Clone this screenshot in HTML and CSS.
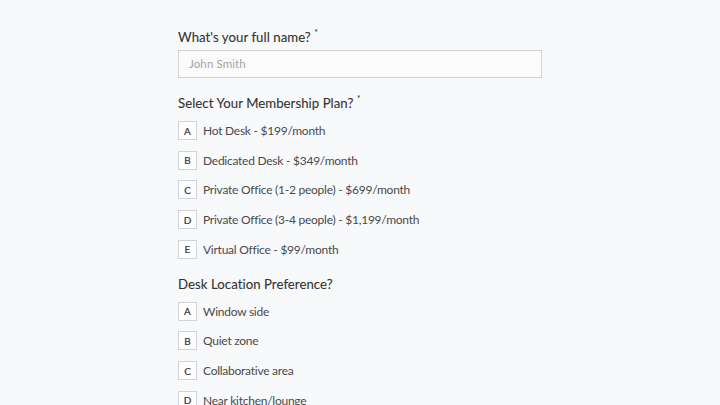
FILE: index.html
```html
<!DOCTYPE html>
<html>
<head>
<meta charset="utf-8">
<link rel="stylesheet" href="styles.css">
</head>
<body>
<main class="form">
  <section class="question q-text">
    <div class="label">What's your full name? <span class="req">*</span></div>
    <div class="input">John Smith</div>
  </section>
  <section class="question">
    <div class="label">Select Your Membership Plan? <span class="req">*</span></div>
    <ul class="options">
      <li class="option"><span class="key">A</span><span class="text">Hot Desk - $199/month</span></li>
      <li class="option"><span class="key">B</span><span class="text">Dedicated Desk - $349/month</span></li>
      <li class="option"><span class="key">C</span><span class="text">Private Office (1-2 people) - $699/month</span></li>
      <li class="option"><span class="key">D</span><span class="text">Private Office (3-4 people) - $1,199/month</span></li>
      <li class="option"><span class="key">E</span><span class="text">Virtual Office - $99/month</span></li>
    </ul>
  </section>
  <section class="question">
    <div class="label">Desk Location Preference?</div>
    <ul class="options">
      <li class="option"><span class="key">A</span><span class="text">Window side</span></li>
      <li class="option"><span class="key">B</span><span class="text">Quiet zone</span></li>
      <li class="option"><span class="key">C</span><span class="text">Collaborative area</span></li>
      <li class="option"><span class="key">D</span><span class="text">Near kitchen/lounge</span></li>
    </ul>
  </section>
</main>
</body>
</html>
```
FILE: styles.css
```css
html, body {
  margin: 0;
  padding: 0;
  background: #f8f9fb;
  overflow: hidden;
  height: 405px;
}
body {
  font-family: Lato, "Open Sans", sans-serif;
  color: #3b3b3b;
}
.form {
  width: 364px;
  margin: 0 auto;
  padding-top: 27px;
  display: flex;
  flex-direction: column;
  gap: 15px;
}
.question {
  display: flex;
  flex-direction: column;
}
.label {
  font-size: 13.2px;
  line-height: 20px;
  font-weight: 400;
  color: #333;
  letter-spacing: 0.05px;
  margin-bottom: 8px;
  -webkit-text-stroke: 0.1px #333;
}
.q-text .label {
  margin-bottom: 3px;
}
.req {
  display: inline-block;
  font-size: 9px;
  line-height: 9px;
  position: relative;
  top: -6px;
  margin-left: 0;
  -webkit-text-stroke: 0;
}
.input {
  box-sizing: border-box;
  height: 28px;
  border: 1px solid #cfd3d8;
  background: #fbfbfc;
  padding: 0 10px;
  font-size: 11.5px;
  line-height: 26px;
  color: #a3a3a3;
  letter-spacing: 0.1px;
}
.options {
  list-style: none;
  margin: 0;
  padding: 0;
  display: flex;
  flex-direction: column;
  gap: 10.7px;
}
.option {
  display: flex;
  align-items: center;
  gap: 6px;
  height: 19px;
}
.key {
  box-sizing: border-box;
  width: 19px;
  height: 19px;
  border: 1px solid #cfd3d8;
  background: #fff;
  display: flex;
  align-items: center;
  justify-content: center;
  font-size: 10px;
  font-weight: 400;
  -webkit-text-stroke: 0.2px #333;
  color: #333;
}
.text {
  font-size: 12px;
  color: #4a4a4a;
  letter-spacing: -0.25px;
}
```
